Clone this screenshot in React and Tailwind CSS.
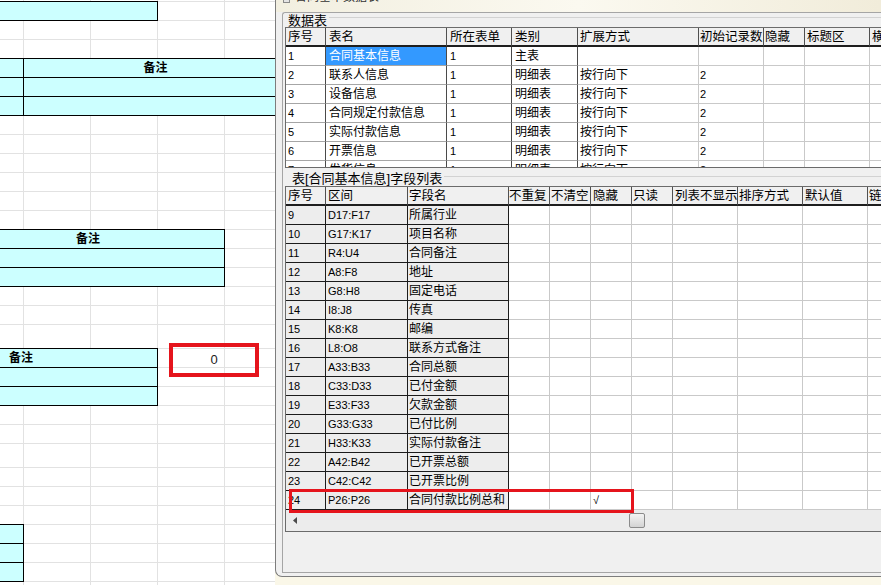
import React from "react";

// spreadsheet behind the dialog
function Sheet() {
  const cells = [];
  for (let r = 0; r < 32; r++) {
    for (let c = 0; c < 5; c++) {
      cells.push(<div key={`${r}-${c}`} className="border-r border-b border-[#e2e2e2]" />);
    }
  }

  const cy = "bg-[#ccffff] border-r border-b border-black flex items-center text-[12px] font-bold";
  const top = "border-t -mt-px";

  return (
    <div className="relative grid grid-cols-[292px] grid-rows-[601px] w-[275px] h-[585px] shrink-0 overflow-hidden bg-white">
      <div className="col-start-1 row-start-1 grid grid-cols-[24px_repeat(4,67px)] grid-rows-[2px_repeat(17,19px)_24px_repeat(5,19px)_24px_repeat(7,19px)]">
        {cells}
      </div>

      <div className="col-start-1 row-start-1 grid grid-cols-[24px_repeat(4,67px)] grid-rows-[2px_repeat(17,19px)_24px_repeat(5,19px)_24px_repeat(7,19px)]">
        {/* box 1 */}
        <div className={`${cy} ${top} row-start-2 col-start-1 col-span-3`} />

        {/* box 2 */}
        <div className={`${cy} ${top} row-start-5 col-start-1`} />
        <div className={`${cy} ${top} row-start-5 col-start-2 col-span-4 justify-center pr-[4px]`}>备注</div>
        <div className={`${cy} row-start-6 col-start-1`} />
        <div className={`${cy} row-start-6 col-start-2 col-span-4`} />
        <div className={`${cy} row-start-7 col-start-1`} />
        <div className={`${cy} row-start-7 col-start-2 col-span-4`} />

        {/* box 3 */}
        <div className={`${cy} ${top} row-start-14 col-start-1 col-span-4 pl-[76px]`}>备注</div>
        <div className={`${cy} row-start-15 col-start-1 col-span-4`} />
        <div className={`${cy} row-start-16 col-start-1 col-span-4`} />

        {/* box 4 */}
        <div className={`${cy} ${top} row-start-20 col-start-1 col-span-3 pl-[9px]`}>备注</div>
        <div className={`${cy} row-start-21 col-start-1 col-span-3`} />
        <div className={`${cy} row-start-22 col-start-1 col-span-3`} />

        {/* box 5 */}
        <div className={`${cy} ${top} row-start-29 col-start-1`} />
        <div className={`${cy} row-start-30 col-start-1`} />
        <div className={`${cy} row-start-31 col-start-1`} />
      </div>

      {/* red annotation */}
      <div className="absolute left-[169px] top-[343px] w-[90px] h-[34px] border-[4px] border-[#e5141c] flex items-center justify-center text-[13px] text-[#222]">
        0
      </div>
    </div>
  );
}

const isAscii = (s) => /^[\x00-\x7F√]*$/.test(s);

const t1Cols = [
  { w: "w-[40px]", pl: "pl-[2px]", dark: true, h: "序号" },
  { w: "w-[121px]", pl: "pl-[3px]", dark: true, h: "表名" },
  { w: "w-[65px]", pl: "pl-[3px]", dark: true, h: "所在表单" },
  { w: "w-[66px]", pl: "pl-[3px]", dark: true, h: "类别" },
  { w: "w-[121px]", pl: "pl-[2px]", h: "扩展方式" },
  { w: "w-[65px]", pl: "pl-[1px]", h: "初始记录数" },
  { w: "w-[41px]", pl: "pl-[1px]", h: "隐藏" },
  { w: "w-[65px]", pl: "pl-[2px]", h: "标题区" },
  { w: "w-[80px]", pl: "pl-[2px]", h: "横向扩展" },
];

const t1Rows = [
  ["1", "合同基本信息", "1", "主表", "", "", "", "", ""],
  ["2", "联系人信息", "1", "明细表", "按行向下", "2", "", "", ""],
  ["3", "设备信息", "1", "明细表", "按行向下", "2", "", "", ""],
  ["4", "合同规定付款信息", "1", "明细表", "按行向下", "2", "", "", ""],
  ["5", "实际付款信息", "1", "明细表", "按行向下", "2", "", "", ""],
  ["6", "开票信息", "1", "明细表", "按行向下", "2", "", "", ""],
  ["7", "发货信息", "1", "明细表", "按行向下", "2", "", "", ""],
];

const t2Cols = [
  { w: "w-[40px]", pl: "pl-[2px]", fixed: true, h: "序号" },
  { w: "w-[82px]", pl: "pl-[2px]", fixed: true, h: "区间" },
  { w: "w-[101px]", pl: "pl-[1px]", fixed: true, h: "字段名" },
  { w: "w-[41px]", pl: "pl-0", h: "不重复" },
  { w: "w-[41px]", pl: "pl-[1px]", h: "不清空" },
  { w: "w-[41px]", pl: "pl-[2px]", h: "隐藏" },
  { w: "w-[41px]", pl: "pl-[1px]", h: "只读" },
  { w: "w-[65px]", pl: "pl-[2px]", h: "列表不显示" },
  { w: "w-[65px]", pl: "pl-[1px]", h: "排序方式" },
  { w: "w-[65px]", pl: "pl-[2px]", h: "默认值" },
  { w: "w-[80px]", pl: "pl-[1px]", h: "链接" },
];

const fields = [
  ["9", "D17:F17", "所属行业"],
  ["10", "G17:K17", "项目名称"],
  ["11", "R4:U4", "合同备注"],
  ["12", "A8:F8", "地址"],
  ["13", "G8:H8", "固定电话"],
  ["14", "I8:J8", "传真"],
  ["15", "K8:K8", "邮编"],
  ["16", "L8:O8", "联系方式备注"],
  ["17", "A33:B33", "合同总额"],
  ["18", "C33:D33", "已付金额"],
  ["19", "E33:F33", "欠款金额"],
  ["20", "G33:G33", "已付比例"],
  ["21", "H33:K33", "实际付款备注"],
  ["22", "A42:B42", "已开票总额"],
  ["23", "C42:C42", "已开票比例"],
  ["24", "P26:P26", "合同付款比例总和", "", "", "√"],
];

function HeaderRow({ cols }) {
  return (
    <div className="flex w-max">
      {cols.map((c, i) => (
        <div
          key={i}
          className={`${c.w} ${c.pl} shrink-0 h-[19px] pt-px bg-[#f0f0f0] border-r border-b-2 border-r-[#505050] border-b-[#1e1e1e] text-[12.5px] leading-[16px] whitespace-nowrap overflow-hidden`}
        >
          {c.h}
        </div>
      ))}
    </div>
  );
}

function Cell({ col, text, selected, kind }) {
  let tone = "bg-white border-[#c9c9c9]";
  if (kind === "dark") tone = "bg-white border-r-[#4a4a4a] border-b-[#a6a6a6]";
  if (kind === "fixed") tone = "bg-[#ededed] border-[#1c1c1c]";
  if (selected) tone = "bg-[#3399ff] text-white border-r-[#4a4a4a] border-b-[#a6a6a6]";
  const size = isAscii(text) ? "text-[11px]" : "text-[12px]";
  return (
    <div
      className={`${col.w} ${col.pl} ${tone} ${size} shrink-0 h-[19px] border-r border-b leading-[18px] whitespace-nowrap overflow-hidden`}
    >
      {text}
    </div>
  );
}

function Dialog() {
  return (
    <div className="relative w-[606px] h-[585px] shrink-0 overflow-hidden bg-[#faf7e8]">
      <div className="h-[577px] flex flex-col bg-[#f0f0f0] border-l border-b border-[#7d7d7d] rounded-bl-[7px]">
        {/* title bar, mostly scrolled off the top */}
        <div className="h-[12px] shrink-0 flex items-start overflow-hidden bg-gradient-to-r from-[#f2efe0] via-[#fbf9f0] to-[#f1ecda]">
          <div className="ml-[7px] -mt-[7px] w-[7px] h-[10px] border border-[#8a8a8a] bg-[#e4e4e4]" />
          <div className="ml-[5px] -mt-[9px] text-[12px] leading-[12px] text-[#333]">合同基本数据表</div>
        </div>

        {/* group boxes */}
        <div className="ml-[6px] h-[561px] shrink-0 flex flex-col border-l border-t border-b border-[#a5a5a5] rounded-tl-[3px]">
          <div className="h-[14px] shrink-0 flex items-start">
            <span className="pl-[5px] pt-[2px] text-[13px] leading-[12px]">数据表</span>
            <div className="flex-1 h-px mt-[4px] ml-[2px] bg-[#d2d2d2]" />
          </div>

          <div className="ml-[2px] h-[141px] shrink-0 overflow-hidden border-l border-t border-b border-[#6b6b6b]">
            <HeaderRow cols={t1Cols} />
            {t1Rows.map((row, r) => (
              <div key={r} className="flex w-max">
                {t1Cols.map((c, i) => (
                  <Cell key={i} col={c} text={row[i]} kind={c.dark ? "dark" : ""} selected={r === 0 && i === 1} />
                ))}
              </div>
            ))}
          </div>

          <div className="h-[18px] shrink-0 flex items-start">
            <span className="pl-[9px] pt-[3px] text-[13px] leading-[15px]">表[合同基本信息]字段列表</span>
            <div className="flex-1 h-px mt-[8px] ml-[2px] bg-[#d2d2d2]" />
          </div>

          <div className="ml-[2px] h-[346px] shrink-0 overflow-hidden flex flex-col border-l border-t border-b border-[#6b6b6b]">
            <HeaderRow cols={t2Cols} />
            {fields.map((row, r) => (
              <div key={r} className="flex w-max">
                {t2Cols.map((c, i) => (
                  <Cell key={i} col={c} text={row[i] || ""} kind={c.fixed ? "fixed" : ""} />
                ))}
              </div>
            ))}
            {/* horizontal scrollbar */}
            <div className="h-[21px] shrink-0 flex items-center bg-[#ececec]">
              <div className="w-[17px] h-[21px] flex items-center justify-center">
                <svg width="4" height="7" viewBox="0 0 4 7">
                  <polygon points="4,0 4,7 0,3.5" fill="#4a4a4a" />
                </svg>
              </div>
              <div className="w-[326px]" />
              <div className="w-[16px] h-[15px] rounded-[2px] border border-[#8b8b8b] bg-gradient-to-b from-[#f4f4f4] to-[#d3d3d3]" />
            </div>
          </div>
          <div className="flex-1" />
        </div>
      </div>

      {/* red annotation around last field row */}
      <div className="absolute left-[14px] top-[489px] w-[345px] h-[24px] border-[3px] border-[#e5141c]" />
    </div>
  );
}

export default function App() {
  return (
    <div className="flex w-[881px] h-[585px] overflow-hidden bg-white text-black font-['Liberation_Sans','Noto_Sans_CJK_SC',sans-serif]">
      <Sheet />
      <Dialog />
    </div>
  );
}
